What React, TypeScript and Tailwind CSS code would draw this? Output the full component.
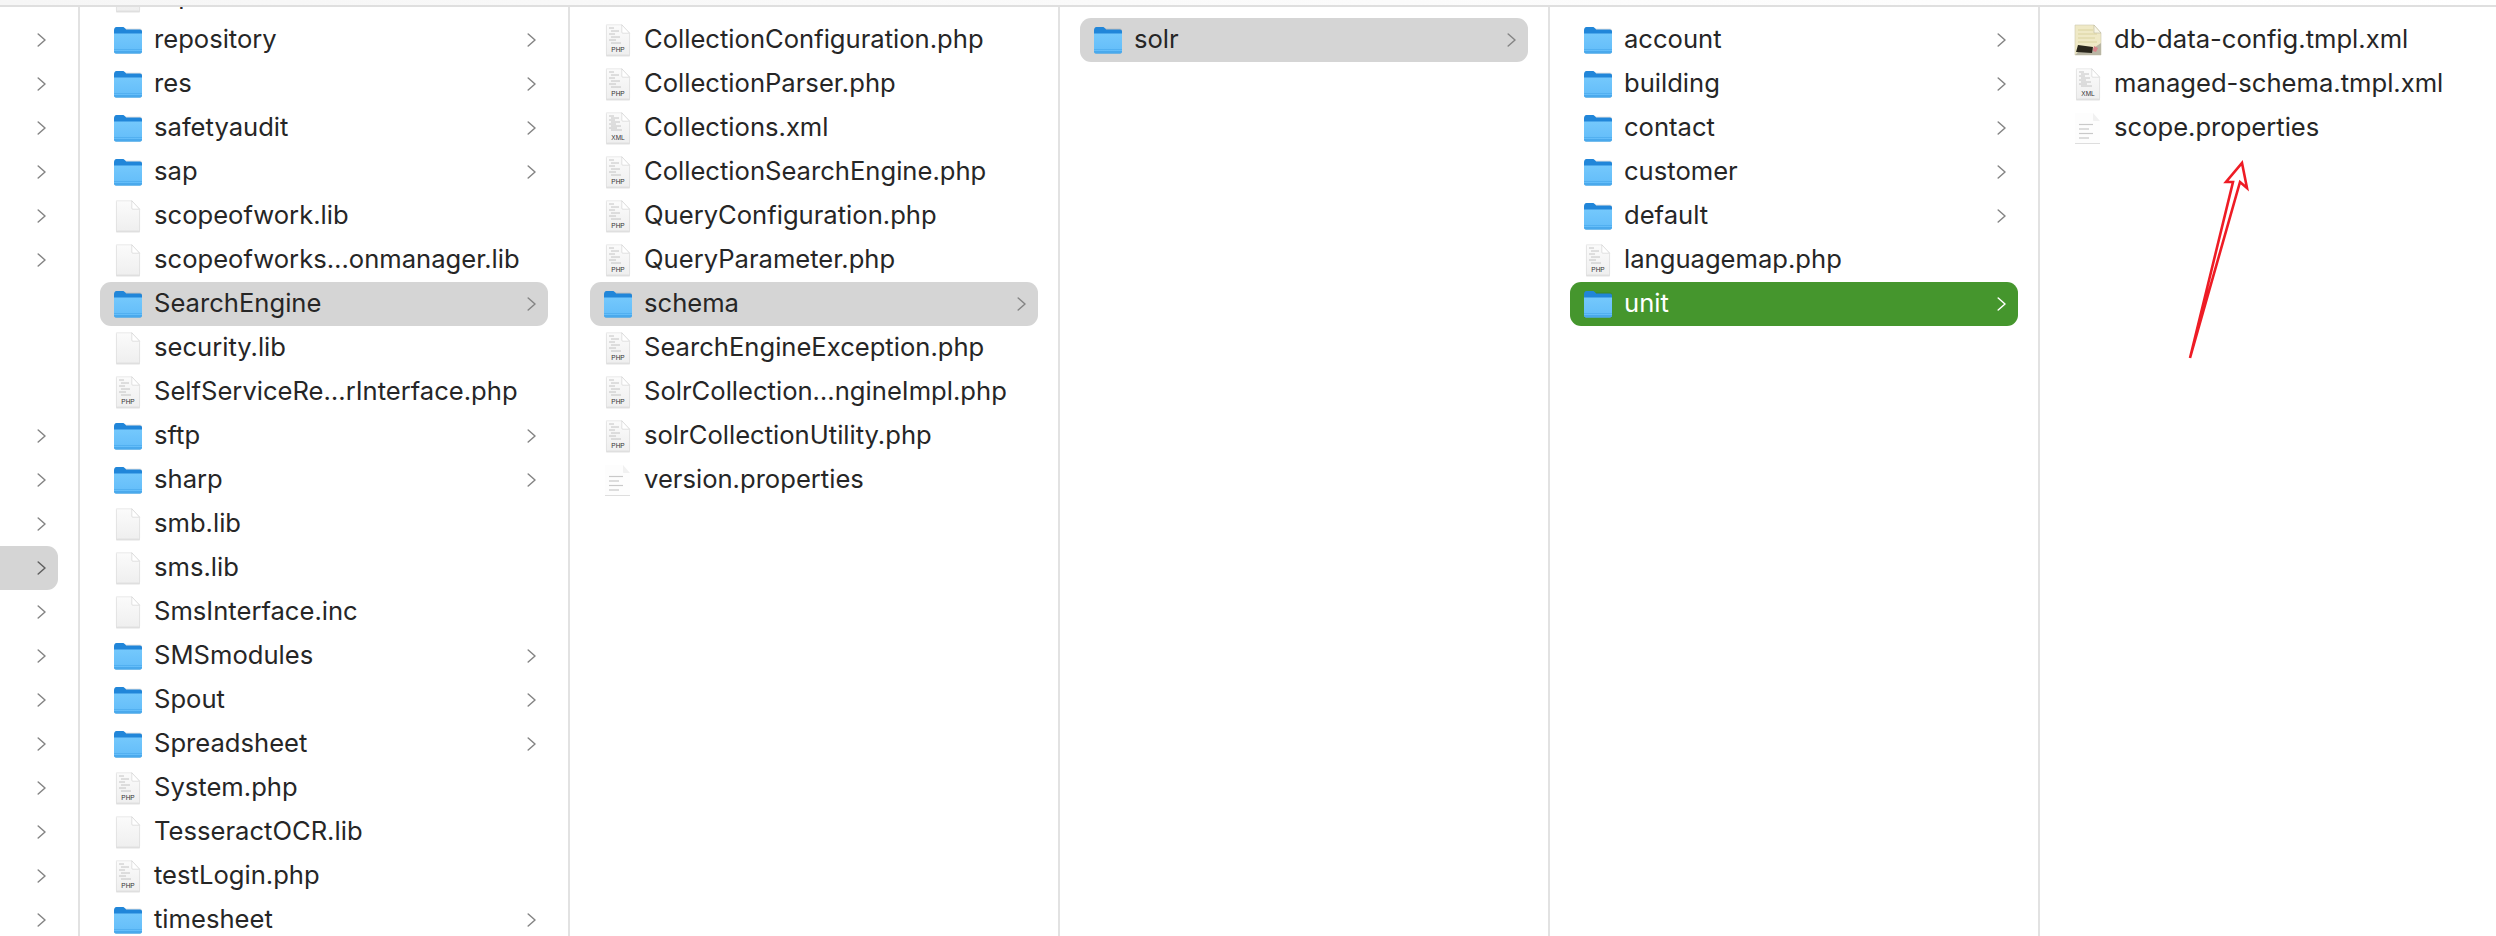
import type { ReactNode } from 'react';

type Kind = 'folder' | 'blank' | 'php' | 'xml' | 'stamp' | 'props';

type Item = {
  name: string;
  kind: Kind;
  state?: 'gray' | 'green';
};

const folder = (name: string, state?: Item['state']): Item => ({ name, kind: 'folder', state });
const blank = (name: string): Item => ({ name, kind: 'blank' });
const php = (name: string): Item => ({ name, kind: 'php' });
const xml = (name: string): Item => ({ name, kind: 'xml' });

const rootRows = [
  true, true, true, true, true, true, false, false, false, true, true, true,
  true, true, true, true, true, true, true, true, true,
];

const libraryItems: Item[] = [
  folder('repository'),
  folder('res'),
  folder('safetyaudit'),
  folder('sap'),
  blank('scopeofwork.lib'),
  blank('scopeofworks…onmanager.lib'),
  folder('SearchEngine', 'gray'),
  blank('security.lib'),
  php('SelfServiceRe…rInterface.php'),
  folder('sftp'),
  folder('sharp'),
  blank('smb.lib'),
  blank('sms.lib'),
  blank('SmsInterface.inc'),
  folder('SMSmodules'),
  folder('Spout'),
  folder('Spreadsheet'),
  php('System.php'),
  blank('TesseractOCR.lib'),
  php('testLogin.php'),
  folder('timesheet'),
];

const searchItems: Item[] = [
  php('CollectionConfiguration.php'),
  php('CollectionParser.php'),
  xml('Collections.xml'),
  php('CollectionSearchEngine.php'),
  php('QueryConfiguration.php'),
  php('QueryParameter.php'),
  folder('schema', 'gray'),
  php('SearchEngineException.php'),
  php('SolrCollection…ngineImpl.php'),
  php('solrCollectionUtility.php'),
  { name: 'version.properties', kind: 'props' },
];

const schemaItems: Item[] = [folder('solr', 'gray')];

const solrItems: Item[] = [
  folder('account'),
  folder('building'),
  folder('contact'),
  folder('customer'),
  folder('default'),
  php('languagemap.php'),
  folder('unit', 'green'),
];

const unitItems: Item[] = [
  { name: 'db-data-config.tmpl.xml', kind: 'stamp' },
  xml('managed-schema.tmpl.xml'),
  { name: 'scope.properties', kind: 'props' },
];

function FolderIcon() {
  return (
    <svg width="30" height="30" viewBox="0 0 30 30" className="shrink-0">
      <defs>
        <linearGradient id="folderBody" x1="0" y1="0" x2="0" y2="1">
          <stop offset="0" stopColor="#74c8fc" />
          <stop offset="1" stopColor="#62bcf9" />
        </linearGradient>
      </defs>
      <rect x="1" y="3.5" width="28" height="25.5" rx="2" fill="#000" opacity="0.1" />
      <path d="M1 5.5C1 3.8 1.8 2 3.5 2h6c1.4 0 2 .7 2.8 1.6l.9 1H27c1.2 0 2 .8 2 2V10H1z" fill="#2186d9" />
      <path d="M1 8.6h28v18c0 1.1-.8 1.9-2 1.9H3c-1.200 0-2-.8-2-1.900z" fill="url(#folderBody)" />
      <rect x="1" y="24" width="28" height="1" fill="#4aa9ec" opacity="0.7" />
      <path d="M1 26h28v.6c0 1.100-.8 1.900-2 1.900H3c-1.200 0-2-.8-2-1.900z" fill="#4aa9ec" />
    </svg>
  );
}

function Sheet({ children }: { children?: ReactNode }) {
  return (
    <svg width="30" height="34" viewBox="0 0 30 34" className="shrink-0">
      <defs>
        <linearGradient id="sheetBody" x1="0" y1="0" x2="0" y2="1">
          <stop offset="0" stopColor="#fbfbfb" />
          <stop offset="1" stopColor="#efefef" />
        </linearGradient>
      </defs>
      <path d="M3 2h16l8 8.500V31.500c0 .6-.4 1-1 1H4c-.6 0-1-.4-1-1z" fill="#000" opacity="0.12" transform="translate(0 .9)" />
      <path d="M3.400 1.800h15.400l7.800 8.400v21c0 .4-.3.700-.7.700H4.100c-.4 0-.7-.3-.7-.7z" fill="url(#sheetBody)" stroke="#dcdcdc" strokeWidth="0.6" />
      <path d="M18.800 1.800v7.300c0 .6.400 1.100 1 1.100h6.800z" fill="#fff" stroke="#cfcfcf" strokeWidth="0.6" />
      {children}
    </svg>
  );
}

function CodeLines({ dense = false }: { dense?: boolean }) {
  const rows = dense ? [5, 7, 9, 11, 13, 15, 17, 19] : [5, 8, 11, 14, 17, 20];
  return (
    <g stroke="#bdbdbd" strokeWidth="0.9">
      {rows.map((y, i) => (
        <line key={y} x1={i % 2 ? 8 : 6} x2={6 + ((i * 5) % 9) + 5} y1={y} y2={y} />
      ))}
    </g>
  );
}

function TagText({ label }: { label: string }) {
  return (
    <text
      x="15"
      y="29"
      textAnchor="middle"
      fontSize="6.5"
      fontFamily="'Liberation Sans', sans-serif"
      fill="#333"
    >
      {label}
    </text>
  );
}

function FileIcon({ kind }: { kind: Kind }) {
  if (kind === 'folder') return <FolderIcon />;
  if (kind === 'blank') return <Sheet />;
  if (kind === 'php') {
    return (
      <Sheet>
        <CodeLines />
        <TagText label="PHP" />
      </Sheet>
    );
  }
  if (kind === 'xml') {
    return (
      <Sheet>
        <CodeLines dense />
        <TagText label="XML" />
      </Sheet>
    );
  }
  if (kind === 'stamp') {
    return (
      <svg width="30" height="34" viewBox="0 0 30 34" className="shrink-0">
        <path d="M2 2h19l7 8v22H2z" fill="#efe9c6" stroke="#cfcbb0" strokeWidth="0.6" />
        <path d="M21 2v8h7z" fill="#f7f5e6" stroke="#bdb9a0" strokeWidth="0.6" />
        <g stroke="#d8d09c" strokeWidth="0.9">
          <line x1="5" x2="20" y1="7" y2="7" />
          <line x1="5" x2="24" y1="11" y2="11" />
          <line x1="5" x2="22" y1="15" y2="15" />
          <line x1="5" x2="24" y1="19" y2="19" />
        </g>
        <path d="M2 32l9-9 8 3 9-6v12z" fill="#b9b6a4" />
        <path d="M5 22l15 2-1 6-16-1z" fill="#29261b" />
        <path d="M21 23l4 2-2 4-3-1z" fill="#d9848a" />
      </svg>
    );
  }
  // the pale properties sheet has no outline, only a bottom rule
  return (
    <svg width="30" height="34" viewBox="0 0 30 34" className="shrink-0">
      <path d="M2 2h18l7 8v22H2z" fill="#fdfdfd" />
      <path d="M20 2v7c0 .6.400 1 1 1h6z" fill="#f1f1f1" />
      <line x1="2" x2="27" y1="32.500" y2="32.500" stroke="#dedede" />
      <g stroke="#c9c9c9" strokeWidth="1.200">
        <line x1="6" x2="20" y1="13.500" y2="13.500" />
        <line x1="6" x2="16" y1="18" y2="18" />
        <line x1="6" x2="20" y1="22.500" y2="22.500" />
        <line x1="6" x2="16" y1="27" y2="27" />
      </g>
    </svg>
  );
}

function Chevron({ white = false, strong = false }: { white?: boolean; strong?: boolean }) {
  return (
    <svg width="10" height="14" viewBox="0 0 10 14" className="shrink-0">
      <path
        d="M1.200 1 8 7l-6.800 6"
        fill="none"
        stroke={white ? '#ffffff' : strong ? '#5f5f5f' : '#858585'}
        strokeWidth="1.500"
        strokeLinecap="round"
        strokeLinejoin="round"
      />
    </svg>
  );
}

function Row({ item }: { item: Item }) {
  const isFolder = item.kind === 'folder';
  return (
    <div
      className={`flex h-[44px] items-center rounded-[11px] pr-[11px] pl-[13px] ${
        item.state === 'gray' ? 'bg-[#d5d5d5]' : item.state === 'green' ? 'bg-[#45962d]' : ''
      }`}
    >
      <span className="flex w-[30px] shrink-0 items-center justify-center">
        <FileIcon kind={item.kind} />
      </span>
      <span
        className={`ml-[11px] flex-1 whitespace-nowrap pb-[2px] text-[25.6px] leading-[42px] ${
          item.state === 'green' ? 'text-white' : 'text-[#262626]'
        }`}
      >
        {item.name}
      </span>
      {isFolder && <Chevron white={item.state === 'green'} />}
    </div>
  );
}

function Column({ items, first = false }: { items: Item[]; first?: boolean }) {
  return (
    <div className="h-full w-[490px] shrink-0 overflow-hidden border-l-2 border-[#e2e2e2] pt-[11px] pr-[20px] pl-[20px]">
      {first && (
        <div className="-mt-[44px]">
          <Row item={blank('report.lib')} />
        </div>
      )}
      {items.map((item) => (
        <Row key={item.name} item={item} />
      ))}
    </div>
  );
}

export default function App() {
  return (
    <div
      className="relative flex h-[936px] w-[2496px] flex-col overflow-hidden bg-white"
      style={{ fontFamily: "Inter, 'Liberation Sans', sans-serif" }}
    >
      <div className="z-10 h-[7px] shrink-0 border-b-2 border-[#dfdfdf] bg-gradient-to-r from-[#f6f6f6] to-white" />

      <div className="flex min-h-0 flex-1">
        <div className="h-full w-[78px] shrink-0 overflow-hidden pt-[11px] pr-[20px]">
          {rootRows.map((hasChevron, i) => (
            <div
              key={i}
              className={`flex h-[44px] items-center justify-end rounded-r-[11px] pr-[11px] ${
                i === 12 ? 'bg-[#d5d5d5]' : ''
              }`}
            >
              {hasChevron && <Chevron strong={i === 12} />}
            </div>
          ))}
        </div>
        <Column items={libraryItems} first />
        <Column items={searchItems} />
        <Column items={schemaItems} />
        <Column items={solrItems} />
        <div className="h-full min-w-0 flex-1 border-l-2 border-[#e2e2e2] pt-[11px] pr-[20px] pl-[20px]">
          {unitItems.map((item) => (
            <Row key={item.name} item={item} />
          ))}
        </div>
      </div>

      {/* red annotation arrow drawn over the finder window */}
      <svg
        className="absolute top-[150px] left-[2170px]"
        width="90"
        height="220"
        viewBox="0 0 90 220"
        fill="none"
      >
        <path d="M20 208 63 32 56 32 72 13 77 38 70 32 20 208z" stroke="#ee1c25" strokeWidth="2.600" strokeLinejoin="miter" strokeLinecap="round" />
      </svg>
    </div>
  );
}
